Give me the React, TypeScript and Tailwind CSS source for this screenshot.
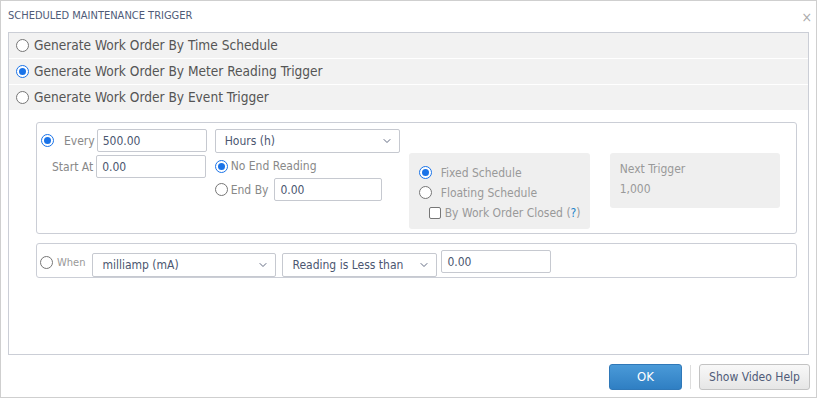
import { ChevronDown } from "lucide-react";

const font = { fontFamily: '"DejaVu Sans Condensed", Tahoma, "Liberation Sans", sans-serif' };

function Radio({ checked }: { checked?: boolean }) {
  return (
    <span
      className={
        "flex shrink-0 w-[13px] h-[13px] rounded-full border items-center justify-center bg-white " +
        (checked ? "border-[#1a73e8]" : "border-[#767676]")
      }
    >
      {checked && <span className="w-[7px] h-[7px] rounded-full bg-[#1a73e8]" />}
    </span>
  );
}

function Field({ value, className }: { value: string; className: string }) {
  return (
    <div
      className={
        "h-[23px] border border-[#c6c9d0] rounded-[2px] bg-white flex items-center px-[5px] text-[12px] text-[#4b5670] " +
        className
      }
    >
      {value}
    </div>
  );
}

function Select({ value, className }: { value: string; className: string }) {
  return (
    <div
      className={
        "h-[24px] border border-[#c6c9d0] rounded-[2px] bg-white flex items-center justify-between pl-[9px] pr-[6px] text-[12px] text-[#4b5670] whitespace-nowrap " +
        className
      }
    >
      <span>{value}</span>
      <ChevronDown size={12} strokeWidth={1.75} className="text-[#4b5670]" />
    </div>
  );
}

const options = [
  { label: "Generate Work Order By Time Schedule", checked: false },
  { label: "Generate Work Order By Meter Reading Trigger", checked: true },
  { label: "Generate Work Order By Event Trigger", checked: false },
];

export default function App() {
  return (
    <div style={font} className="w-[817px] h-[398px] bg-white border border-[#cfcfcf] flex flex-col">
      <div className="h-[31px] flex items-center justify-between pl-[7px] pr-[4px]">
        <span className="text-[11px] text-[#4f5b78]">SCHEDULED MAINTENANCE TRIGGER</span>
        <span className="text-[14px] text-[#aaa] leading-none font-light">×</span>
      </div>

      <div className="mx-[7px] h-[323px] border border-[#cbced6] flex flex-col">
        {options.map((o) => (
          <div key={o.label} className="h-[26px] bg-[#f2f2f2] border-b border-white flex items-center gap-[5px] pl-[7px]">
            <Radio checked={o.checked} />
            <span className="text-[13.6px] text-[#555] whitespace-nowrap">{o.label}</span>
          </div>
        ))}

        <div className="pl-[27px] pr-[11px] pt-[11px] flex flex-col gap-[9px]">
          <div className="h-[112px] border border-[#cbced6] rounded-[3px] flex items-start pt-[6px] pl-[4px] whitespace-nowrap">
            <div className="flex flex-col gap-[3px]">
              <div className="flex items-center">
                <Radio checked />
                <span className="ml-[10px] mr-[2px] text-[12px] text-[#888]">Every</span>
                <Field value="500.00" className="w-[110px]" />
              </div>
              <div className="flex items-center">
                <span className="ml-[11px] mr-[3px] text-[12px] text-[#888]">Start At</span>
                <Field value="0.00" className="w-[110px]" />
              </div>
            </div>

            <div className="ml-[8px] flex flex-col">
              <Select value="Hours (h)" className="w-[185px]" />
              <div className="flex items-center gap-[3px] h-[24px] mt-[1px]">
                <Radio checked />
                <span className="text-[12px] text-[#888]">No End Reading</span>
              </div>
              <div className="flex items-center gap-[3px]">
                <Radio />
                <span className="text-[12px] text-[#888] mr-[3px]">End By</span>
                <Field value="0.00" className="w-[108px]" />
              </div>
            </div>

            <div className="ml-[9px] mt-[24px] w-[181px] h-[76px] bg-[#efefef] rounded-[3px] pt-[12px] pl-[10px] flex flex-col gap-[5px]">
              <div className="flex items-center gap-[9px] h-[15px]">
                <Radio checked />
                <span className="text-[12px] text-[#999]">Fixed Schedule</span>
              </div>
              <div className="flex items-center gap-[9px] h-[15px]">
                <Radio />
                <span className="text-[12px] text-[#999]">Floating Schedule</span>
              </div>
              <div className="flex items-center gap-[4px] h-[15px] ml-[10px]">
                <span className="w-[12px] h-[12px] border border-[#767676] rounded-[2px] bg-white" />
                <span className="text-[12px] text-[#999]">
                  By Work Order Closed (<span className="text-[#1a82c9]">?</span>)
                </span>
              </div>
            </div>

            <div className="ml-[20px] mt-[24px] w-[170px] h-[55px] bg-[#efefef] rounded-[3px] pt-[7px] pl-[10px] flex flex-col gap-[2px] text-[12px] text-[#999]">
              <span>Next Trigger</span>
              <span>1,000</span>
            </div>
          </div>

          <div className="h-[35px] border border-[#cbced6] rounded-[3px] flex items-start pl-[3px] pt-[6px] whitespace-nowrap">
            <span className="mt-[6px] flex"><Radio /></span>
            <span className="ml-[4px] mt-[5px] text-[11px] leading-[16px] text-[#999]">When</span>
            <Select value="milliamp (mA)" className="ml-[7px] mt-[3px] w-[184px]" />
            <Select value="Reading is Less than" className="ml-[6px] mt-[3px] w-[155px]" />
            <Field value="0.00" className="ml-[4px] w-[110px]" />
          </div>
        </div>
      </div>

      <div className="flex-1 flex items-center justify-end pr-[6px] pt-[1px]">
        <button className="w-[73px] h-[26px] rounded-[3px] border border-[#2f78b8] bg-gradient-to-b from-[#4a9ad8] to-[#2f7fc3] text-white text-[13px]">
          OK
        </button>
        <span className="mx-[8px] w-px h-[24px] bg-[#ddd]" />
        <button className="w-[111px] h-[26px] rounded-[3px] border border-[#c3c3c3] bg-gradient-to-b from-[#f8f8f8] to-[#e6e6e6] text-[#4f5b78] text-[12px]">
          Show Video Help
        </button>
      </div>
    </div>
  );
}
